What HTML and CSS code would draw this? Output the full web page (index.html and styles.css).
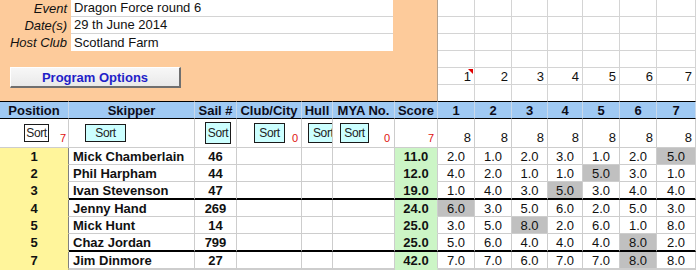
FILE: index.html
```html
<!DOCTYPE html>
<html>
<head>
<meta charset="utf-8">
<link rel="stylesheet" href="styles.css">
</head>
<body>
<div class="top">
  <div class="info">
    <div class="fields">
      <div class="lbl">Event</div><div class="val line">Dragon Force round 6</div>
      <div class="lbl">Date(s)</div><div class="val line">29 th June 2014</div>
      <div class="lbl">Host Club</div><div class="val">Scotland Farm</div>
    </div>
    <button class="prog">Program Options</button>
  </div>
  <div class="topgrid">
    <div class="t"></div><div class="t"></div><div class="t"></div><div class="t"></div><div class="t"></div><div class="t"></div><div class="t"></div>
    <div class="t"></div><div class="t"></div><div class="t"></div><div class="t"></div><div class="t"></div><div class="t"></div><div class="t"></div>
    <div class="t"></div><div class="t"></div><div class="t"></div><div class="t"></div><div class="t"></div><div class="t"></div><div class="t"></div>
    <div class="t"></div><div class="t"></div><div class="t"></div><div class="t"></div><div class="t"></div><div class="t"></div><div class="t"></div>
    <div class="t n note">1</div><div class="t n">2</div><div class="t n">3</div><div class="t n">4</div><div class="t n">5</div><div class="t n">6</div><div class="t n">7</div>
    <div class="t last"></div><div class="t last"></div><div class="t last"></div><div class="t last"></div><div class="t last"></div><div class="t last"></div><div class="t last"></div>
  </div>
</div>

<div class="sheet">
  <!-- header -->
  <div class="c h">Position</div>
  <div class="c h">Skipper</div>
  <div class="c h">Sail #</div>
  <div class="c h">Club/City</div>
  <div class="c h">Hull</div>
  <div class="c h">MYA No.</div>
  <div class="c h">Score</div>
  <div class="c h">1</div><div class="c h">2</div><div class="c h">3</div><div class="c h">4</div><div class="c h">5</div><div class="c h">6</div><div class="c h">7</div>

  <!-- sort row -->
  <div class="c s s-pos"><span class="sortbtn white">Sort</span><span class="cnt">7</span></div>
  <div class="c s s-skip"><span class="sortbtn">Sort</span></div>
  <div class="c s s-sail"><span class="sortbtn">Sort</span></div>
  <div class="c s s-club"><span class="sortbtn">Sort</span><span class="cnt">0</span></div>
  <div class="c s s-hull"><span class="sortbtn clip">Sort</span></div>
  <div class="c s s-mya"><span class="sortbtn">Sort</span><span class="cnt">0</span></div>
  <div class="c s s-score"><span class="cnt">7</span></div>
  <div class="c s s-race">8</div><div class="c s s-race">8</div><div class="c s s-race">8</div><div class="c s s-race">8</div><div class="c s s-race">8</div><div class="c s s-race">8</div><div class="c s s-race">8</div>

  <!-- row 1 -->
  <div class="c pos">1</div><div class="c sk">Mick Chamberlain</div><div class="c sn">46</div><div class="c"></div><div class="c"></div><div class="c"></div><div class="c sc">11.0</div>
  <div class="c r">2.0</div><div class="c r">1.0</div><div class="c r">2.0</div><div class="c r">3.0</div><div class="c r">1.0</div><div class="c r">2.0</div><div class="c r g">5.0</div>
  <!-- row 2 -->
  <div class="c pos">2</div><div class="c sk">Phil Harpham</div><div class="c sn">44</div><div class="c"></div><div class="c"></div><div class="c"></div><div class="c sc">12.0</div>
  <div class="c r">4.0</div><div class="c r">2.0</div><div class="c r">1.0</div><div class="c r">1.0</div><div class="c r g">5.0</div><div class="c r">3.0</div><div class="c r">1.0</div>
  <!-- row 3 -->
  <div class="c pos thk">3</div><div class="c sk thk">Ivan Stevenson</div><div class="c sn thk">47</div><div class="c thk"></div><div class="c thk"></div><div class="c thk"></div><div class="c sc thk">19.0</div>
  <div class="c r thk">1.0</div><div class="c r thk">4.0</div><div class="c r thk">3.0</div><div class="c r g thk">5.0</div><div class="c r thk">3.0</div><div class="c r thk">4.0</div><div class="c r thk">4.0</div>
  <!-- row 4 -->
  <div class="c pos">4</div><div class="c sk">Jenny Hand</div><div class="c sn">269</div><div class="c"></div><div class="c"></div><div class="c"></div><div class="c sc">24.0</div>
  <div class="c r g">6.0</div><div class="c r">3.0</div><div class="c r">5.0</div><div class="c r">6.0</div><div class="c r">2.0</div><div class="c r">5.0</div><div class="c r">3.0</div>
  <!-- row 5 -->
  <div class="c pos">5</div><div class="c sk">Mick Hunt</div><div class="c sn">14</div><div class="c"></div><div class="c"></div><div class="c"></div><div class="c sc">25.0</div>
  <div class="c r">3.0</div><div class="c r">5.0</div><div class="c r g">8.0</div><div class="c r">2.0</div><div class="c r">6.0</div><div class="c r">1.0</div><div class="c r">8.0</div>
  <!-- row 6 -->
  <div class="c pos thk">5</div><div class="c sk thk">Chaz Jordan</div><div class="c sn thk">799</div><div class="c thk"></div><div class="c thk"></div><div class="c thk"></div><div class="c sc thk">25.0</div>
  <div class="c r thk">5.0</div><div class="c r thk">6.0</div><div class="c r thk">4.0</div><div class="c r thk">4.0</div><div class="c r thk">4.0</div><div class="c r g thk">8.0</div><div class="c r thk">2.0</div>
  <!-- row 7 -->
  <div class="c pos">7</div><div class="c sk">Jim Dinmore</div><div class="c sn">27</div><div class="c"></div><div class="c"></div><div class="c"></div><div class="c sc">42.0</div>
  <div class="c r">7.0</div><div class="c r">7.0</div><div class="c r">6.0</div><div class="c r">7.0</div><div class="c r">7.0</div><div class="c r g">8.0</div><div class="c r">8.0</div>
  <!-- row 8 -->
  <div class="c pos"></div><div class="c sk"></div><div class="c sn"></div><div class="c"></div><div class="c"></div><div class="c"></div><div class="c sc"></div>
  <div class="c r"></div><div class="c r"></div><div class="c r"></div><div class="c r"></div><div class="c r"></div><div class="c r"></div><div class="c r"></div>
</div>
</body>
</html>
```

FILE: styles.css
```css
html, body {
  margin: 0;
  padding: 0;
  background: #ffffff;
}
body {
  font-family: "Liberation Sans", Arial, sans-serif;
  font-size: 13px;
  color: #111;
  width: 696px;
  overflow: hidden;
}

/* ---------- top area ---------- */
.top {
  display: flex;
  height: 101px;
}
.info {
  box-sizing: border-box;
  width: 438px;
  height: 101px;
  background: #fdcb9b;
  border-right: 1px solid #b3a08c;
  display: flex;
  flex-direction: column;
  align-items: flex-start;
}
.fields {
  display: grid;
  grid-template-columns: 71px 322px;
  grid-template-rows: 17px 17px 17px;
}
.lbl {
  font-style: italic;
  text-align: right;
  padding-right: 4px;
  line-height: 17px;
  white-space: nowrap;
}
.val {
  box-sizing: border-box;
  background: #fff;
  padding-left: 3px;
  line-height: 17px;
  white-space: nowrap;
}
.val.line {
  border-bottom: 1px solid #d4d4d4;
  line-height: 16px;
}
.prog {
  box-sizing: border-box;
  margin: 16px 0 0 10px;
  width: 171px;
  height: 21px;
  padding: 0;
  font-family: "Liberation Sans", Arial, sans-serif;
  font-size: 13px;
  font-weight: bold;
  color: #1f1fc8;
  background: linear-gradient(#f7f7f7, #e9e9e9);
  border-style: solid;
  border-width: 1px 2px 2px 1px;
  border-color: #ffffff #6f6f6f #6f6f6f #ffffff;
}

.topgrid {
  display: grid;
  grid-template-columns: 37px 37px 36px 35px 37px 37px 39px;
  grid-template-rows: 17px 17px 17px 17px 17px 16px;
}
.t {
  box-sizing: border-box;
  border-right: 1px solid #d4d4d4;
  border-bottom: 1px solid #d4d4d4;
}
.t.last {
  border-bottom: none;
}
.t.n {
  text-align: right;
  padding-right: 3px;
  line-height: 18px;
  position: relative;
}
.t.note::after {
  content: "";
  position: absolute;
  top: 1px;
  right: 1px;
  width: 0;
  height: 0;
  border-top: 5px solid #e00000;
  border-left: 5px solid transparent;
}

/* ---------- main sheet ---------- */
.sheet {
  display: grid;
  grid-template-columns: 69px 126px 42px 65px 31px 62px 43px 37px 37px 36px 35px 37px 37px 39px;
  grid-template-rows: 18px 29px 17px 17px 18px 17px 17px 18px 17px;
}
.c {
  box-sizing: border-box;
  border-right: 1px solid #cdcdcd;
  border-bottom: 1px solid #cdcdcd;
  display: flex;
  align-items: center;
  white-space: nowrap;
  overflow: hidden;
}

.h {
  background: #9fc9f3;
  border-top: 1px solid #000;
  border-bottom: 1px solid #000;
  border-right-color: #c9d9ea;
  justify-content: center;
  font-weight: bold;
  color: #0d0d1a;
}

.s {
  background: #fff;
}
.sortbtn {
  box-sizing: border-box;
  display: flex;
  align-items: center;
  justify-content: center;
  height: 20px;
  background: #ccffff;
  border: 1px solid #1a1a1a;
  font-size: 12px;
  letter-spacing: -0.4px;
  color: #222;
  overflow: hidden;
  flex: none;
}
.sortbtn.white {
  background: #ffffff;
}
.sortbtn.clip {
  justify-content: flex-start;
  padding-left: 4px;
}
.cnt {
  margin-left: auto;
  align-self: flex-end;
  font-size: 11px;
  color: #e01010;
  line-height: 13px;
  padding-bottom: 2px;
}
.s-pos { padding-left: 24px; padding-right: 2px; }
.s-pos .sortbtn { width: 25px; height: 18px; }
.s-skip { padding-left: 16px; }
.s-skip .sortbtn { width: 41px; height: 18px; }
.s-sail { padding-left: 10px; }
.s-sail .sortbtn { width: 26px; height: 22px; }
.s-club { padding-left: 17px; padding-right: 3px; }
.s-club .sortbtn { width: 31px; }
.s-hull { padding-left: 6px; }
.s-hull .sortbtn { width: 25px; }
.s-mya { padding-left: 7px; padding-right: 4px; }
.s-mya .sortbtn { width: 29px; }
.s-score { padding-right: 3px; }
.s-race {
  justify-content: flex-end;
  align-items: flex-end;
  padding-right: 3px;
  padding-bottom: 2px;
  line-height: 14px;
}

.pos {
  background: #fff59b;
  border-bottom-color: #fff59b;
  border-right-color: #7f7f7f;
  justify-content: center;
  font-weight: bold;
}
.sk {
  font-weight: bold;
  padding-left: 4px;
}
.sn {
  font-weight: bold;
  justify-content: center;
}
.sc {
  background: #ccf5c6;
  border-bottom-color: #ccf5c6;
  justify-content: center;
  font-weight: bold;
}
.r {
  justify-content: center;
}
.g {
  background: #c0c0c0;
}
.thk {
  border-bottom: 2px solid #000;
}
.pos.thk {
  border-bottom: 2px solid #fff59b;
}
```
